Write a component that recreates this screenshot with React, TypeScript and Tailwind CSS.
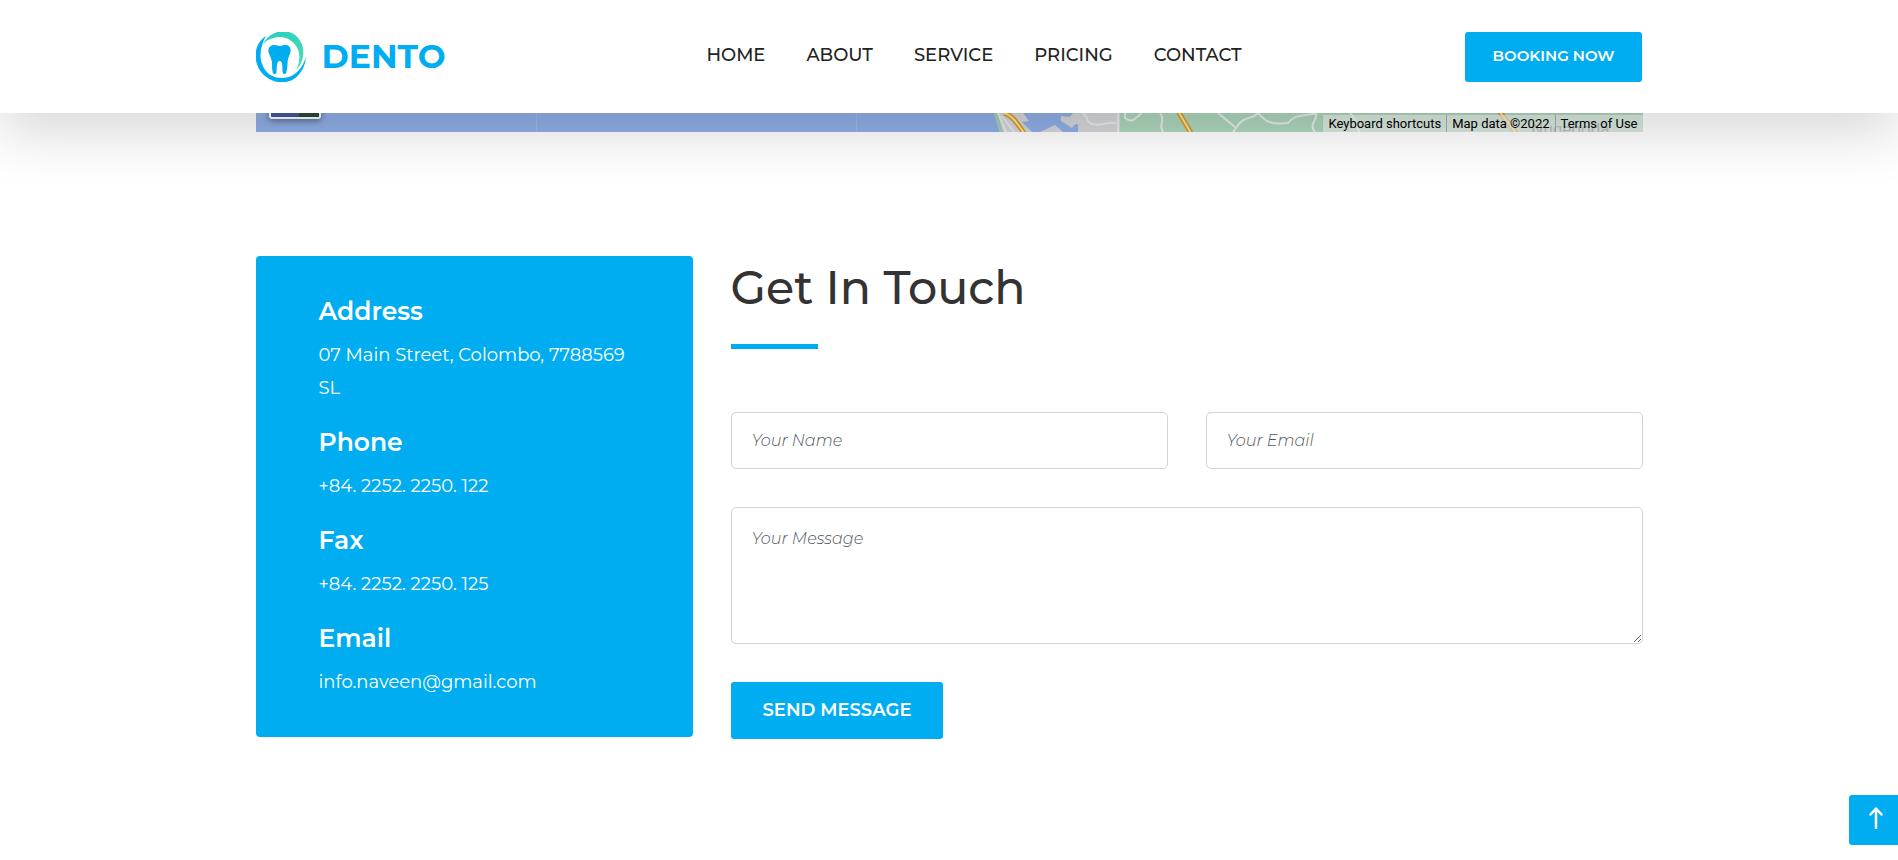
import React, { useState } from "react";

const navLinks = ["HOME", "ABOUT", "SERVICE", "PRICING", "CONTACT"];

const contactDetails = [
  { title: "Address", value: "07 Main Street, Colombo, 7788569 SL" },
  { title: "Phone", value: "+84. 2252. 2250. 122" },
  { title: "Fax", value: "+84. 2252. 2250. 125" },
  { title: "Email", value: "info.naveen@gmail.com" },
];

const fieldClass =
  "w-full rounded-[5px] border border-[#ced4da] bg-white px-5 text-[16px] text-[#333] placeholder:font-light placeholder:italic placeholder:text-[#4f575e] placeholder:opacity-100 focus:border-[#00adf1] focus:outline-none";

function LogoMark() {
  return (
    <svg viewBox="0 0 50 50" className="h-[50px] w-[50px]" aria-hidden="true">
      <defs>
        <linearGradient id="ring" x1="0" y1="0" x2="1" y2="1">
          <stop offset="0" stopColor="#1fd0c0" />
          <stop offset="1" stopColor="#4fdcb4" />
        </linearGradient>
      </defs>
      <path
        d="M7 12C15 -3 34 -5 43 7C50 17 48 29 40.500 38C44.500 28 44.500 19 39 12.500C31 3 17 2.500 7 12Z"
        fill="url(#ring)"
      />
      <path
        d="M10 4C-1 11 -3 25 2.500 36C10 50 28 55 40 45.500C46 40 49 34 50 25C46 37 40 43 31 45.500C20 47.500 10 43 6.500 33C2.500 24 5 13 10 4Z"
        fill="#00adf1"
      />
      <path
        d="M12.500 20C11.500 14 16.500 12 20.500 13.300C23 14.200 25 14.200 27 13.300C31.500 12 35.500 14 34.500 20C34 23 32 25 31.700 29C31.300 33 31.500 37 30.300 40.500C29.300 43 27 42.500 26.600 40C26.200 36 27 29 23.600 29C20.300 29 21 36 20.600 40C20.200 42.500 17.500 43 16.800 40.500C15.800 37 16.200 33 15.700 29C15.200 25 13 23 12.500 20Z"
        fill="#00adf1"
      />
    </svg>
  );
}

function Header() {
  return (
    <header className="relative z-10 bg-white shadow-[0_19px_57px_rgba(0,0,0,0.16)]">
      <div className="mx-auto flex h-[113px] max-w-[1387px] items-center justify-between">
        <a href="#" className="flex items-center gap-4 text-[#00adf1]">
          <LogoMark />
          <span className="text-[33px] leading-none font-bold">DENTO</span>
        </a>
        <nav className="ml-[38px] flex gap-[41px] pb-1">
          {navLinks.map((link) => (
            <a
              key={link}
              href={`#${link.toLowerCase()}`}
              className="text-[18px] leading-6 font-medium text-[#222]"
            >
              {link}
            </a>
          ))}
        </nav>
        <button
          type="button"
          className="h-[50px] rounded-[3px] bg-[#00adf1] px-7 text-[15px] font-semibold text-white"
        >
          BOOKING NOW
        </button>
      </div>
    </header>
  );
}

function MapStrip() {
  return (
    <div className="relative mx-auto h-[19px] max-w-[1387px] overflow-hidden bg-[#91b0e8]">
      <svg
        viewBox="0 0 1387 19"
        preserveAspectRatio="xMaxYMin slice"
        className="block h-[19px] w-full"
        aria-hidden="true"
      >
        <rect width="1387" height="19" fill="#91b0e8" />
        <path d="M280.500 0V19M600.500 0V19" stroke="#a0bbea" />
        <path d="M738 0H864V19H744Z" fill="#d6d7db" />
        <path d="M738 0H742L747 19H744Z" fill="#a5d0b3" />
        <path d="M767 0H817L814 4L805 3L805 8L816 15L820 10L822 12V19H807L799 12L784 19H776L766 9L773 8Z" fill="#91b0e8" />
        <path d="M818 0L812 6L818 12L823 10V19H864V0Z" fill="#d6d7db" />
        <path d="M864 0H1387V19H864Z" fill="#aed7bc" />
        <path d="M742 0L750 19M746 3L758 19" stroke="#e9ebed" strokeWidth="2" fill="none" />
        <path d="M748 0C756 2 761 10 768 20" stroke="#d99a1c" strokeWidth="5" fill="none" />
        <path d="M748 0C756 2 761 10 768 20" stroke="#fbe0a0" strokeWidth="2" fill="none" />
        <path
          d="M826 0C834 3 828 9 836 11C846 14 850 8 860 10M862 0V19M869 0V5C878 12 880 3 886 0M904 0C910 6 902 12 907 19M962 0L980 15L977 19M980 15C988 2 996 7 1002 0M1002 0C1014 14 1022 10 1032 10C1040 0 1048 4 1060 0M1060 0C1062 8 1052 10 1059 19M1094 0C1106 12 1098 14 1104 19"
          stroke="#e6efe9"
          strokeWidth="2"
          fill="none"
        />
        <path d="M922 -2L935 20M1243 -2L1260 20" stroke="#d99a1c" strokeWidth="5" />
        <path d="M922 -2L935 20M1243 -2L1260 20" stroke="#fbe0a0" strokeWidth="2" />
      </svg>

      {/* satellite toggle, cut off by the header */}
      <div className="absolute -top-8 left-[13px] flex h-[38px] w-[52px] overflow-hidden rounded-[3px] border-2 border-white bg-[#44589c] shadow-[0_2px_6px_rgba(0,0,0,0.4)]">
        <div className="ml-auto h-full w-5 bg-[#2f4a3c]" />
      </div>

      <span className="absolute top-[6px] right-[33px] text-[17px] leading-5 text-[#6b6f75] [font-family:Roboto,sans-serif]">
        Nugegoda
      </span>

      <div className="absolute right-0 bottom-0 flex h-[17px] bg-[#f5f5f5]/60 text-[13px] leading-[17px] text-black [font-family:Roboto,sans-serif]">
        <button type="button" className="px-[5px]">
          Keyboard shortcuts
        </button>
        <span className="border-l border-[#9db5a5] px-[5px]">Map data ©2022</span>
        <a href="#terms" className="border-l border-[#9db5a5] px-[5px]">
          Terms of Use
        </a>
      </div>
    </div>
  );
}

function ContactCard() {
  return (
    <aside className="rounded-[4px] bg-[#00adf1] px-[63px] pt-10 pb-[38px] text-white">
      <dl className="flex flex-col gap-[22px]">
        {contactDetails.map((item) => (
          <div key={item.title}>
            <dt className="mb-3 text-[25px] leading-[31px] font-semibold">{item.title}</dt>
            <dd className="text-[18px] leading-[33px]">{item.value}</dd>
          </div>
        ))}
      </dl>
    </aside>
  );
}

function ContactForm() {
  const [name, setName] = useState("");
  const [email, setEmail] = useState("");
  const [message, setMessage] = useState("");

  return (
    <section className="lg:col-span-2">
      <h2 className="pt-1 text-[46px] leading-[56px] font-medium text-[#333]">Get In Touch</h2>
      <div className="mt-7 h-[5px] w-[87px] bg-[#00adf1]" />

      <form
        className="mt-[63px] grid gap-[38px] lg:grid-cols-2"
        onSubmit={(e) => e.preventDefault()}
      >
        <input
          type="text"
          aria-label="Your Name"
          placeholder="Your Name"
          value={name}
          onChange={(e) => setName(e.target.value)}
          className={`${fieldClass} h-[57px]`}
        />
        <input
          type="email"
          aria-label="Your Email"
          placeholder="Your Email"
          value={email}
          onChange={(e) => setEmail(e.target.value)}
          className={`${fieldClass} h-[57px]`}
        />
        <textarea
          aria-label="Your Message"
          placeholder="Your Message"
          value={message}
          onChange={(e) => setMessage(e.target.value)}
          className={`${fieldClass} block h-[137px] resize-y py-[19px] leading-6 lg:col-span-2`}
        />
        <button
          type="submit"
          className="h-[57px] justify-self-start rounded-[3px] bg-[#00adf1] px-8 text-[18px] font-semibold text-white"
        >
          SEND MESSAGE
        </button>
      </form>
    </section>
  );
}

export default function App() {
  return (
    <div className="min-h-screen bg-white [font-family:Montserrat,Inter,sans-serif]">
      <Header />
      <MapStrip />
      <main className="mx-auto grid max-w-[1387px] items-start gap-[38px] pt-[124px] pb-[120px] lg:grid-cols-3">
        <ContactCard />
        <ContactForm />
      </main>

      <button
        type="button"
        aria-label="Back to top"
        onClick={() => window.scrollTo({ top: 0, behavior: "smooth" })}
        className="fixed right-0 bottom-[15px] z-20 flex h-[50px] w-[49px] items-center justify-center rounded-l-[3px] bg-[#00adf1] text-white"
      >
        <svg
          viewBox="0 0 14 22"
          className="mb-1 ml-1 h-[22px] w-[14px]"
          fill="none"
          stroke="currentColor"
          strokeWidth="2.500"
          strokeLinecap="round"
          strokeLinejoin="round"
          aria-hidden="true"
        >
          <path d="M7 21V2M1.500 7.500L7 1.500L12.500 7.500" />
        </svg>
      </button>
    </div>
  );
}
